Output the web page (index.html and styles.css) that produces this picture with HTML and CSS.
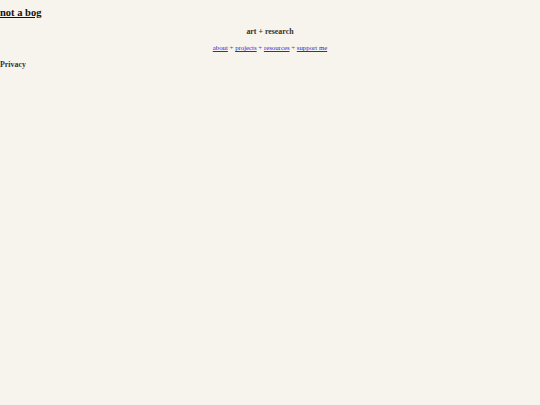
FILE: index.html
```html
<!DOCTYPE html>
<html lang="en">
<head>
<meta charset="utf-8">
<title>Privacy | not a bog</title>
<link rel="stylesheet" href="styles.css">
</head>
<body>
<header class="site-header">
  <div class="site-title"><a href="#">not a bog</a></div>
  <div class="tagline">art + research</div>
  <nav class="nav"><a href="#">about</a> + <a href="#">projects</a> + <a href="#">resources</a> + <a href="#">support me</a></nav>
</header>
<main>
  <h1 class="page-title">Privacy</h1>
</main>
</body>
</html>
```
FILE: styles.css
```css
html, body {
  margin: 0;
  padding: 0;
  background: #f7f3ed;
}
body {
  font-family: "Liberation Serif", "Times New Roman", serif;
  color: #222;
}
.site-title {
  font-size: 10.5px;
  font-weight: bold;
  line-height: 12px;
  padding-top: 7px;
}
.site-title a {
  color: #111;
  text-decoration: underline;
}
.tagline {
  text-align: center;
  font-weight: bold;
  font-size: 7.9px;
  line-height: 10px;
  margin-top: 8px;
  color: #333;
}
.nav {
  text-align: center;
  font-size: 6.8px;
  line-height: 9px;
  margin-top: 6px;
  color: #555;
}
.nav a {
  color: #2a2ad0;
}
.page-title {
  font-size: 7.9px;
  font-weight: bold;
  line-height: 10px;
  margin: 8px 0 0;
  color: #333;
}
```
